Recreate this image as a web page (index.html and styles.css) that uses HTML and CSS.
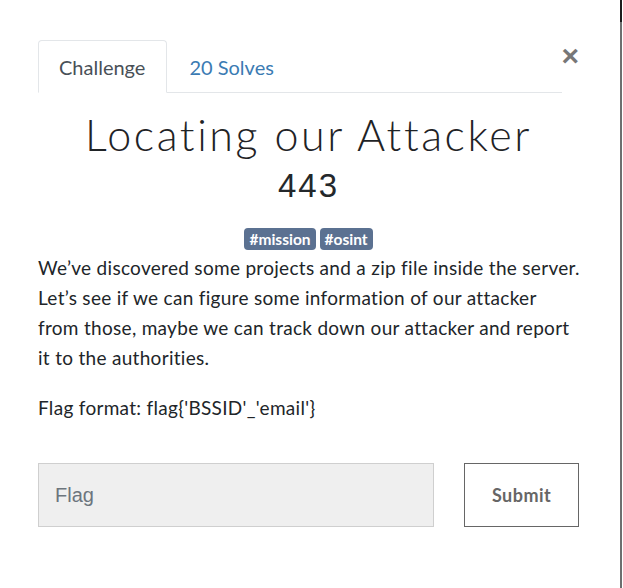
FILE: index.html
```html
<!DOCTYPE html>
<html lang="en">
<head>
<meta charset="utf-8">
<title>Locating our Attacker</title>
<link rel="stylesheet" href="styles.css">
</head>
<body>
<div class="modal">
  <div class="modal-head">
    <ul class="tabs">
      <li class="tab active">Challenge</li>
      <li class="tab link">20 Solves</li>
    </ul>
    <button class="close" aria-label="Close">&times;</button>
  </div>
  <h2 class="title">Locating our Attacker</h2>
  <h3 class="value">443</h3>
  <div class="tags">
    <span class="tag">#mission</span>
    <span class="tag">#osint</span>
  </div>
  <div class="desc">
    <p>We’ve discovered some projects and a zip file inside the server.<br>Let’s see if we can figure some information of our attacker<br>from those, maybe we can track down our attacker and report<br>it to the authorities.</p>
    <p>Flag format: flag{'BSSID'_'email'}</p>
  </div>
  <form class="submit-row">
    <input class="flag-input" type="text" placeholder="Flag">
    <button class="submit-btn" type="button">Submit</button>
  </form>
</div>
<div class="edge"></div>
</body>
</html>
```
FILE: styles.css
```css
html, body {
  margin: 0;
  padding: 0;
  background: #ffffff;
}
body {
  font-family: Lato, "Open Sans", sans-serif;
  color: #212529;
}
.modal {
  width: 541px;
  padding: 40px 0 0 38px;
}
.modal-head {
  display: flex;
  align-items: flex-start;
}
.tabs {
  list-style: none;
  margin: 0;
  padding: 0;
  display: flex;
  width: 527px;
  border-bottom: 1px solid #e3e6e9;
}
.tab {
  font-size: 20px;
  height: 51px;
  line-height: 53px;
  padding: 0 21px 0 20px;
  border: 1px solid transparent;
  border-radius: 4px 4px 0 0;
  margin-bottom: -1px;
}
.tab.active {
  color: #495057;
  border-color: #e3e6e9 #e3e6e9 #ffffff;
  background: #fff;
}
.tab.link {
  color: #3b7bb3;
  padding-left: 21px;
}
.close {
  border: 0;
  background: none;
  padding: 0;
  margin: 3px 0 0 -1px;
  font-family: "Liberation Sans", Arial, sans-serif;
  font-size: 30px;
  line-height: 26px;
  font-weight: bold;
  color: #777777;
  cursor: pointer;
}
.title {
  margin: 17px 0 0;
  text-align: center;
  font-weight: 300;
  font-size: 43px;
  line-height: 50px;
  letter-spacing: 2.6px;
  color: #1f2326;
}
.value {
  margin: 6px 0 0;
  text-align: center;
  font-family: "Liberation Sans", Arial, sans-serif;
  font-weight: 400;
  font-size: 33px;
  line-height: 40px;
  letter-spacing: 2px;
  color: #24282b;
}
.tags {
  display: flex;
  justify-content: center;
  gap: 4px;
  margin-top: 22px;
}
.tag {
  background: #5b7191;
  color: #ffffff;
  font-weight: bold;
  font-size: 15.5px;
  line-height: 22px;
  padding: 0 5px;
  border-radius: 4px;
}
.desc {
  margin-top: 3px;
  margin-right: -30px;
}
.desc p {
  margin: 0 0 20px;
  font-size: 19px;
  letter-spacing: 0.3px;
  line-height: 30px;
  color: #212529;
}
.submit-row {
  display: flex;
  margin-top: 40px;
  gap: 30px;
}
.flag-input {
  width: 397px;
  height: 64px;
  box-sizing: border-box;
  background: #efefef;
  border: 1px solid #cfcfcf;
  padding: 0 16px;
  font-family: "Liberation Sans", Arial, sans-serif;
  font-size: 20px;
  color: #495057;
  outline: none;
}
.flag-input::placeholder {
  color: #6c757d;
}
.submit-btn {
  width: 115px;
  height: 64px;
  box-sizing: border-box;
  background: #ffffff;
  border: 1px solid #666666;
  font-family: Lato, sans-serif;
  font-weight: bold;
  font-size: 18px;
  letter-spacing: 0.5px;
  color: #666666;
}
.edge {
  position: absolute;
  top: 0;
  right: 1px;
  width: 2px;
  height: 588px;
  background: linear-gradient(#1c1c1c 0, #1c1c1c 22px, #6d6f6f 22px, #6d6f6f 100%);
}
```
